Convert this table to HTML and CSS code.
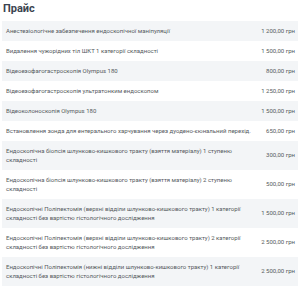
FILE: index.html
```html
<!DOCTYPE html>
<html lang="uk">
<head>
<meta charset="utf-8">
<link rel="stylesheet" href="styles.css">
</head>
<body>
<div class="price">
  <h2 class="price-title">Прайс</h2>
  <table class="price-table">
    <tr class="odd"><td class="name">Анестезіологічне забезпечення ендоскопічної маніпуляції</td><td class="cost">1 200,00 грн</td></tr>
    <tr><td class="name">Видалення чужорідних тіл ШКТ 1 категорії складності</td><td class="cost">1 500,00 грн</td></tr>
    <tr class="odd"><td class="name">Відеоезофагогастроскопія Olympus 180</td><td class="cost">800,00 грн</td></tr>
    <tr><td class="name">Відеоезофагогастроскопія ультратонким ендоскопом</td><td class="cost">1 250,00 грн</td></tr>
    <tr class="odd"><td class="name">Відеоколоноскопія Olympus 180</td><td class="cost">1 500,00 грн</td></tr>
    <tr><td class="name">Встановлення зонда для ентерального харчування через дуодено-єюнальний перехід.</td><td class="cost">650,00 грн</td></tr>
    <tr class="odd tall"><td class="name">Ендоскопічна біопсія шлунково-кишкового тракту (взяття матеріалу) 1 ступеню складності</td><td class="cost">300,00 грн</td></tr>
    <tr class="tall"><td class="name">Ендоскопічна біопсія шлунково-кишкового тракту (взяття матеріалу) 2 ступеню складності</td><td class="cost">500,00 грн</td></tr>
    <tr class="odd tall"><td class="name">Ендоскопічні Поліпектомія (верхні відділи шлунково-кишкового тракту) 1 категорії складності без вартістю гістологічного дослідження</td><td class="cost">1 500,00 грн</td></tr>
    <tr class="tall"><td class="name">Ендоскопічні Поліпектомія (верхні відділи шлунково-кишкового тракту) 2 категорії складності без вартістю гістологічного дослідження</td><td class="cost">2 500,00 грн</td></tr>
    <tr class="odd tall"><td class="name">Ендоскопічні Поліпектомія (нижні відділи шлунково-кишкового тракту) 1 категорії складності без вартістю гістологічного дослідження</td><td class="cost">2 500,00 грн</td></tr>
  </table>
</div>
</body>
</html>
```
FILE: styles.css
```css
html, body {
  margin: 0;
  padding: 0;
  background: #fff;
}
body {
  font-family: Roboto, "Noto Sans", sans-serif;
  color: #555a60;
}
.price {
  padding: 0 2px;
}
.price-title {
  margin: 0;
  padding: 2px 0 0 1px;
  height: 21px;
  box-sizing: border-box;
  font-size: 11px;
  font-weight: 700;
  color: #3b4450;
  line-height: 13px;
}
.price-table {
  width: 100%;
  border-collapse: collapse;
  font-size: 6px;
  line-height: 8.5px;
}
.price-table tr {
  height: 20px;
}
.price-table tr.tall {
  height: 29px;
}
.price-table tr.odd {
  background: #f3f5f7;
}
.price-table td {
  padding: 2px 4px;
  vertical-align: middle;
}
.price-table .name {
  width: 246px;
}
.price-table .cost {
  text-align: right;
  white-space: nowrap;
  padding-right: 3px;
}
```
